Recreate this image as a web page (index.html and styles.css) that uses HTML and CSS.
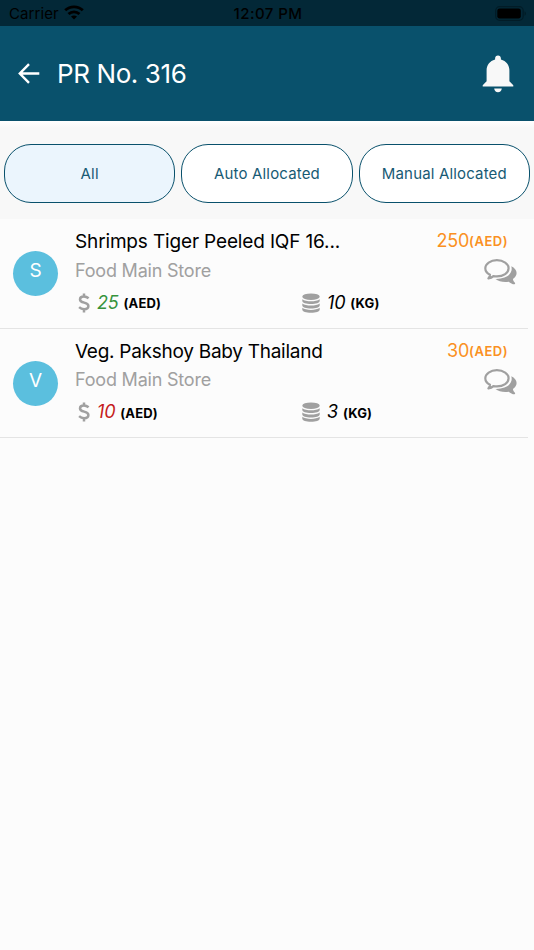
FILE: index.html
```html
<!DOCTYPE html>
<html lang="en">
<head>
<meta charset="utf-8">
<title>PR No. 316</title>
<link rel="stylesheet" href="styles.css">
</head>
<body>
<svg class="defs" aria-hidden="true">
  <symbol id="dollar" viewBox="0 0 12 20">
    <path d="M6 .5v3M6 16v3.500M10.600 5.300C9.300 4.200 7.700 3.500 5.900 3.500 3.600 3.500 2 4.600 2 6.400c0 4.300 8.400 2.200 8.400 6.600 0 2-1.700 3.200-4.300 3.200-1.900 0-3.700-.8-5-2" fill="none" stroke="currentColor" stroke-width="2.500"/>
  </symbol>
  <symbol id="database" viewBox="0 0 18 20">
    <g fill="currentColor"><ellipse cx="9" cy="3.700" rx="8.700" ry="3.300"/>
    <path id="disk" d="M.3 6.200c2 1.500 5 2.100 8.700 2.100s6.700-.6 8.700-2.100v1.900c0 1.700-3.800 3-8.700 3S.3 9.800.3 8.100z"/>
    <use href="#disk" y="4.300"/><use href="#disk" y="8.600"/></g>
  </symbol>
  <symbol id="comments" viewBox="0 0 33 27">
    <path d="M27.300 7.300c3.300 1.600 5.300 4 5.300 6.700 0 2.400-1.400 4.500-3.700 6.100.3 1.800 1.100 2.800 2 3.700.5.600.2 1.500-.5 1.500-1.900-.1-4-1-5.700-2.600-5 .8-10.100-.2-13.200-2.800 9.200.2 16.200-4 16.200-9.800 0-.9-.1-1.800-.4-2.800z" fill="currentColor"/>
    <path d="M12.900 1.200C6.400 1.200 1.300 4.800 1.300 9.300c0 2.600 1.700 5 4.700 6.500-.1 1.500-.8 2.700-1.600 3.700 2-.4 3.700-1.200 5-2.400 1.100.2 2.300.3 3.500.3 6.500 0 11.700-3.600 11.700-8.100s-5.200-8.100-11.700-8.100z" fill="none" stroke="currentColor" stroke-width="2.200" stroke-linejoin="round"/>
  </symbol>
</svg>

<div class="status">
  <div class="carrier"><span>Carrier</span>
    <svg width="20" height="15" viewBox="0 0 20 15"><g fill="none" stroke="#000" stroke-width="2.800"><path d="M1.200 5.300C6.100.6 13.900.6 18.800 5.300"/><path d="M4.500 9c3.100-2.900 7.900-2.900 11 0"/></g><path d="M10 14.500 7 11.500c1.700-1.500 4.300-1.500 6 0z"/></svg>
  </div>
  <div class="time">12:07 PM</div>
  <svg class="battery" width="32" height="16" viewBox="0 0 32 16"><rect x=".7" y=".7" width="27.500" height="13.600" rx="4" fill="none" stroke="#021c27" stroke-width="1.300"/><rect x="2.300" y="2.500" width="23.500" height="10" rx="2.300"/><path d="M29.500 5.200c2 1 2 3.700 0 4.600z" fill="#021c27"/></svg>
</div>

<header class="header">
  <svg class="back" width="22" height="22" viewBox="0 0 22 22"><path d="M11 1.200 1.800 10.500l9.200 9.300M2 10.500h19.300" fill="none" stroke="#fff" stroke-width="2.400"/></svg>
  <h1>PR No. 316</h1>
  <svg class="bell" width="32" height="38" viewBox="0 0 32 38"><path d="M16 .5c1.700 0 2.900 1.200 2.900 3v1c5.300 1.400 8.500 5.800 8.500 11v10.800l3.900 4v1.200H.7v-1.200l3.900-4V15.500c0-5.200 3.200-9.600 8.500-11v-1c0-1.800 1.200-3 2.900-3zM12.200 33.500h7.600c-.2 2.200-1.700 3.700-3.800 3.700s-3.600-1.500-3.800-3.700z" fill="#f8f8f8"/></svg>
</header>

<nav class="tabs">
  <button class="tab active">All</button>
  <button class="tab">Auto Allocated</button>
  <button class="tab">Manual Allocated</button>
</nav>

<main>
  <article class="item">
    <div class="avatar">S</div>
    <div class="content">
      <div class="line title"><h2>Shrimps Tiger Peeled IQF 16...</h2><div class="total">250<b>(AED)</b></div></div>
      <div class="line store"><span>Food Main Store</span><svg class="comments"><use href="#comments"/></svg></div>
      <div class="line meta">
        <div class="price"><svg class="dollar"><use href="#dollar"/></svg><i class="green">25</i><b>(AED)</b></div>
        <div class="stock"><svg class="database"><use href="#database"/></svg><i>10</i><b>(KG)</b></div>
      </div>
    </div>
  </article>
  <article class="item">
    <div class="avatar">V</div>
    <div class="content">
      <div class="line title"><h2 class="tight">Veg. Pakshoy Baby Thailand</h2><div class="total">30<b>(AED)</b></div></div>
      <div class="line store"><span>Food Main Store</span><svg class="comments"><use href="#comments"/></svg></div>
      <div class="line meta">
        <div class="price"><svg class="dollar"><use href="#dollar"/></svg><i class="red">10</i><b>(AED)</b></div>
        <div class="stock"><svg class="database"><use href="#database"/></svg><i>3</i><b>(KG)</b></div>
      </div>
    </div>
  </article>
</main>
</body>
</html>
```
FILE: styles.css
```css
* { box-sizing: border-box; }
body { margin: 0; min-height: 950px; background: #fcfcfc; color: #000; font-family: Inter, "Liberation Sans", sans-serif; }
svg { display: block; flex: none; }
.defs { position: absolute; width: 0; height: 0; }
h1, h2 { margin: 0; font-weight: 400; white-space: nowrap; }

.status { height: 26px; background: #032837; display: grid; grid-template-columns: 1fr auto 1fr; align-items: center; padding: 1px 7px 0 9px; font-size: 15px; line-height: 24px; }
.carrier { display: flex; align-items: center; gap: 5px; letter-spacing: .1px; }
.carrier svg { margin-top: -2px; }
.time { font-weight: 500; font-size: 15px; letter-spacing: .45px; }
.battery { justify-self: end; }

.header { height: 95px; background: #09516c; display: flex; align-items: center; padding: 0 20px 0 18px; }
h1 { color: #fff; font-size: 26px; letter-spacing: -.4px; margin-left: 17px; }
.bell { margin-left: auto; }

.tabs { height: 98px; padding: 23px 4px 0; background: linear-gradient(#fff, #f8f8f8 7px); display: grid; grid-template-columns: repeat(3, 1fr); gap: 6px; }
.tab { height: 59px; padding: 0; border: 1.500px solid #09516c; border-radius: 27px; background: #fff; color: #175a74; font: 400 15px Inter, sans-serif; letter-spacing: .16px; }
.active { background: #ebf5fd; }

.item { height: 109.500px; width: 528px; border-bottom: 1px solid #e4e4e4; display: flex; padding: 8px 0 0 13px; }
.avatar { width: 45px; height: 45px; margin: 24px 17px 0 0; border-radius: 50%; background: #5bbfde; color: #fff; font-size: 19px; line-height: 40px; text-align: center; flex: none; }
.content { flex: 1; }
.line { display: flex; justify-content: space-between; align-items: center; }
.title { height: 29px; padding-right: 20px; }
h2 { font-size: 19px; letter-spacing: -.15px; }
.tight { letter-spacing: -.27px; }
.total { display: flex; align-items: center; color: #fa9022; font-size: 18px; letter-spacing: -.2px; margin-top: -2px; }
.total b { font-size: 13px; font-weight: 600; letter-spacing: .5px; padding-top: 1px; }
.store { height: 28px; padding-right: 11px; color: #a0a0a0; font-size: 18px; letter-spacing: -.2px; }
.comments { width: 33px; height: 27px; margin-top: 5px; }
.meta { height: 37px; justify-content: flex-start; }
.price, .stock { display: flex; align-items: center; }
.price { width: 227px; padding-left: 3px; }
.meta svg { color: #a0a0a0; }
.dollar { width: 12px; height: 20px; margin-right: 7px; }
.database { width: 18px; height: 20px; margin-right: 7px; }
i { font-size: 18px; line-height: 24px; letter-spacing: -.2px; }
.green { color: #36933c; }
.red { color: #c51c20; }
.meta b { font-size: 13px; font-weight: 700; margin-left: 5px; padding-top: 1px; letter-spacing: .15px; }
```
